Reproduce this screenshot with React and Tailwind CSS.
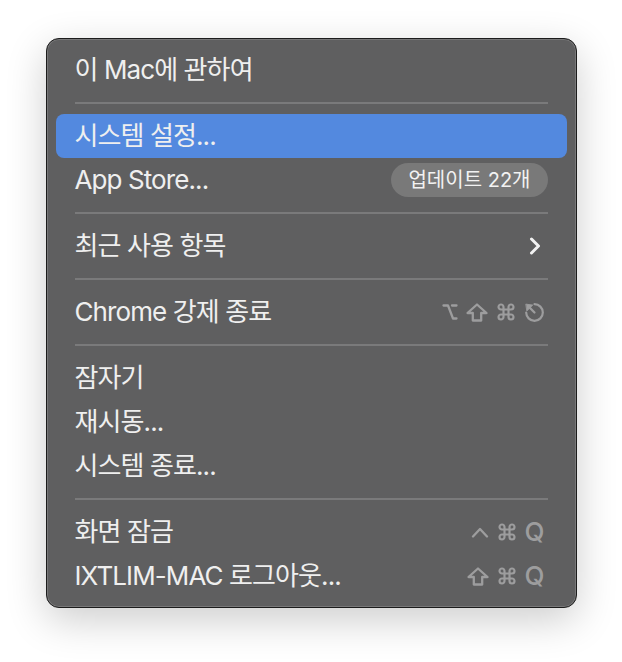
import React from 'react';

const font = { fontFamily: "Inter, 'Noto Sans CJK KR', sans-serif" };

// 단축키 아이콘
const OptionKey = () => (
  <svg width="16" height="18" viewBox="0 0 16 18" fill="none" stroke="currentColor" strokeWidth="2.3" strokeLinecap="round" strokeLinejoin="round">
    <path d="M1.5 2.5H6L11 15.5H14.5" />
    <path d="M10 2.5H14.5" />
  </svg>
);

const ShiftKey = () => (
  <svg width="22" height="19" viewBox="0 0 22 19" fill="none" stroke="currentColor" strokeWidth="2.3" strokeLinejoin="round">
    <path d="M11 1.5L20.5 10H15.2V17.5H6.8V10H1.5Z" />
  </svg>
);

const CmdKey = () => (
  <svg width="20" height="20" viewBox="0 0 24 24" fill="none" stroke="currentColor" strokeWidth="2.6" strokeLinecap="round" strokeLinejoin="round">
    <path d="M15 6v12a3 3 0 1 0 3-3H6a3 3 0 1 0 3 3V6a3 3 0 1 0-3 3h12a3 3 0 1 0-3-3" />
  </svg>
);

const EscKey = () => (
  <svg width="21" height="21" viewBox="0 0 24 24" fill="none" stroke="currentColor" strokeWidth="2.5" strokeLinecap="round">
    <path d="M12 2.5A9.5 9.5 0 1 1 2.5 12" />
    <path d="M5 5L12 12" />
    <path d="M2.5 2.5L10 3.5L3.5 10Z" fill="currentColor" strokeWidth="1" strokeLinejoin="round" />
  </svg>
);

const CtrlKey = () => (
  <svg width="18" height="11" viewBox="0 0 18 11" fill="none" stroke="currentColor" strokeWidth="2.3" strokeLinecap="round" strokeLinejoin="round">
    <path d="M2 9.5L9 2L16 9.5" />
  </svg>
);

const QKey = () => <span className="text-[26px] leading-none font-medium">Q</span>;

const Chevron = () => (
  <svg width="12" height="18" viewBox="0 0 12 18" fill="none" stroke="currentColor" strokeWidth="3" strokeLinecap="round" strokeLinejoin="round" className="mr-[7px]">
    <path d="M2.5 2L9.5 9L2.5 16" />
  </svg>
);

const Shortcut = ({ children }) => (
  <div className="flex items-center gap-[8px] mr-[3px] text-[#9d9d9e]">{children}</div>
);

const Separator = () => (
  <div className="h-[22px] flex items-center px-[19px]">
    <div className="h-[2px] w-full bg-[#7a7a7b]" />
  </div>
);

const Item = ({ label, active, right }) => (
  <div
    className={`h-[44px] px-[19px] rounded-[8px] flex items-center justify-between ${
      active ? 'bg-[#5389df]' : ''
    }`}
  >
    <span className="text-[26px] leading-none tracking-[-0.9px] text-[#efefef]">{label}</span>
    {right}
  </div>
);

export default function App() {
  return (
    <div className="min-h-[662px] bg-white pt-[38px]" style={font}>
      <div className="mx-auto w-[531px] rounded-[13px] border border-[#1c1c1c] bg-[#5f5f60] px-[9px] py-[9px] shadow-[inset_0_0_0_1px_rgba(255,255,255,0.16),0_12px_40px_rgba(0,0,0,0.2)]">
        <Item label="이 Mac에 관하여" />
        <Separator />
        <Item label="시스템 설정..." active />
        <Item
          label="App Store..."
          right={
            <span className="h-[34px] px-[17px] rounded-full bg-[#797979] flex items-center text-[20px] leading-none text-[#f2f2f2]">
              업데이트 22개
            </span>
          }
        />
        <Separator />
        <Item label="최근 사용 항목" right={<span className="text-[#f2f2f2]"><Chevron /></span>} />
        <Separator />
        <Item
          label="Chrome 강제 종료"
          right={
            <Shortcut>
              <OptionKey />
              <ShiftKey />
              <CmdKey />
              <EscKey />
            </Shortcut>
          }
        />
        <Separator />
        <Item label="잠자기" />
        <Item label="재시동..." />
        <Item label="시스템 종료..." />
        <Separator />
        <Item
          label="화면 잠금"
          right={
            <Shortcut>
              <CtrlKey />
              <CmdKey />
              <QKey />
            </Shortcut>
          }
        />
        <Item
          label="IXTLIM-MAC 로그아웃..."
          right={
            <Shortcut>
              <ShiftKey />
              <CmdKey />
              <QKey />
            </Shortcut>
          }
        />
      </div>
    </div>
  );
}
